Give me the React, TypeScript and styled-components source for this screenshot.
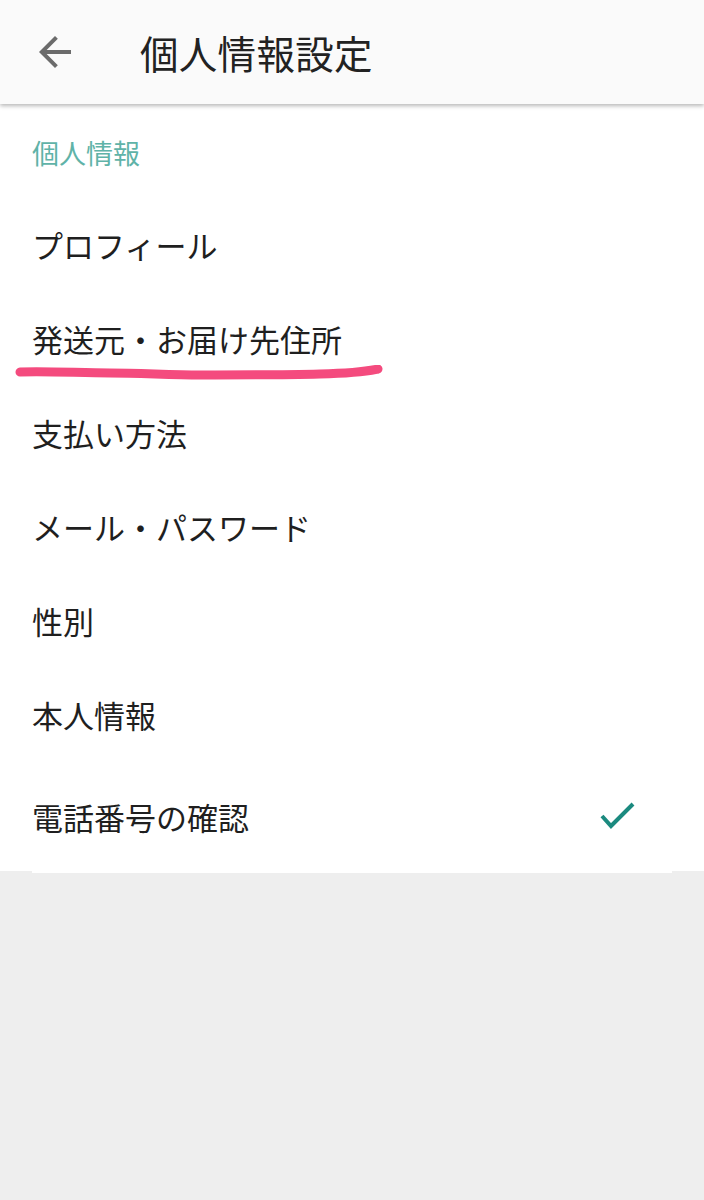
import React from "react";
import styled, { createGlobalStyle } from "styled-components";

const Global = createGlobalStyle`
  html, body { margin: 0; padding: 0; background: #eeeeee; }
  body { font-family: "Noto Sans CJK JP", "Noto Sans", sans-serif; color: #212121; }
  * { box-sizing: border-box; }
`;

const Page = styled.div`
  width: 704px;
  min-height: 1200px;
  background: #eeeeee;
  position: relative;
`;

const AppBar = styled.header`
  height: 104px;
  background: #fafafa;
  display: flex;
  align-items: center;
  box-shadow: 0 2px 4px rgba(0, 0, 0, 0.28);
  position: relative;
  z-index: 2;
`;

const BackButton = styled.div`
  width: 48px;
  height: 48px;
  margin-left: 31px;
  display: flex;
  align-items: center;
  justify-content: center;
  color: #6b6b6b;
`;

const Title = styled.h1`
  margin: 0 0 0 61px;
  font-size: 38.5px;
  font-weight: 400;
  color: #222222;
  line-height: 1;
  letter-spacing: 0.3px;
`;

const Panel = styled.section`
  background: #ffffff;
  position: relative;
`;

const SectionLabel = styled.div`
  height: 93px;
  padding: 4px 32px 0;
  display: flex;
  align-items: center;
  font-size: 27px;
  color: #5fb3a8;
  line-height: 1;
`;

const Row = styled.div<{ $tall?: boolean }>`
  height: ${(p) => (p.$tall ? 110 : 94)}px;
  padding: 0 32px;
  display: flex;
  align-items: center;
  justify-content: space-between;
  position: relative;
`;

const RowText = styled.span`
  font-size: 31px;
  line-height: 1;
  color: #1f1f1f;
`;

const CheckIcon = styled.svg`
  width: 40px;
  height: 32px;
  margin-right: 34px;
`;

const Divider = styled.div`
  height: 2px;
  margin: 0 32px;
  background: #ffffff;
`;

const ScribbleWrap = styled.div`
  position: absolute;
  left: 0;
  top: 74px;
  width: 704px;
  height: 40px;
  pointer-events: none;
`;

const Scribble = styled.svg`
  display: block;
  width: 704px;
  height: 40px;
`;

const items = [
  "プロフィール",
  "発送元・お届け先住所",
  "支払い方法",
  "メール・パスワード",
  "性別",
  "本人情報",
];

export default function App() {
  return (
    <Page>
      <Global />
      <AppBar>
        <BackButton>
          <svg width="48" height="48" viewBox="0 0 24 24" fill="currentColor">
            <path d="M20 11H7.83l5.59-5.59L12 4l-8 8 8 8 1.41-1.41L7.83 13H20v-2z" />
          </svg>
        </BackButton>
        <Title>個人情報設定</Title>
      </AppBar>
      <Panel>
        <SectionLabel>個人情報</SectionLabel>
        {items.map((t, i) => (
          <Row key={t}>
            <RowText>{t}</RowText>
            {i === 1 && (
              <ScribbleWrap>
                <Scribble viewBox="0 0 704 40">
                  <path
                    d="M20 7 C 50 6, 80 8, 110 8 S 170 10, 200 10 S 280 10, 320 9 S 368 6, 378 4"
                    fill="none"
                    stroke="#f44b7e"
                    strokeWidth="9"
                    strokeLinecap="round"
                  />
                </Scribble>
              </ScribbleWrap>
            )}
          </Row>
        ))}
        <Row $tall>
          <RowText>電話番号の確認</RowText>
          <CheckIcon viewBox="0 0 40 32">
            <polyline
              points="4,16 13,26 35,4"
              fill="none"
              stroke="#1b8a7f"
              strokeWidth="4"
            />
          </CheckIcon>
        </Row>
      </Panel>
      <Divider />
    </Page>
  );
}
